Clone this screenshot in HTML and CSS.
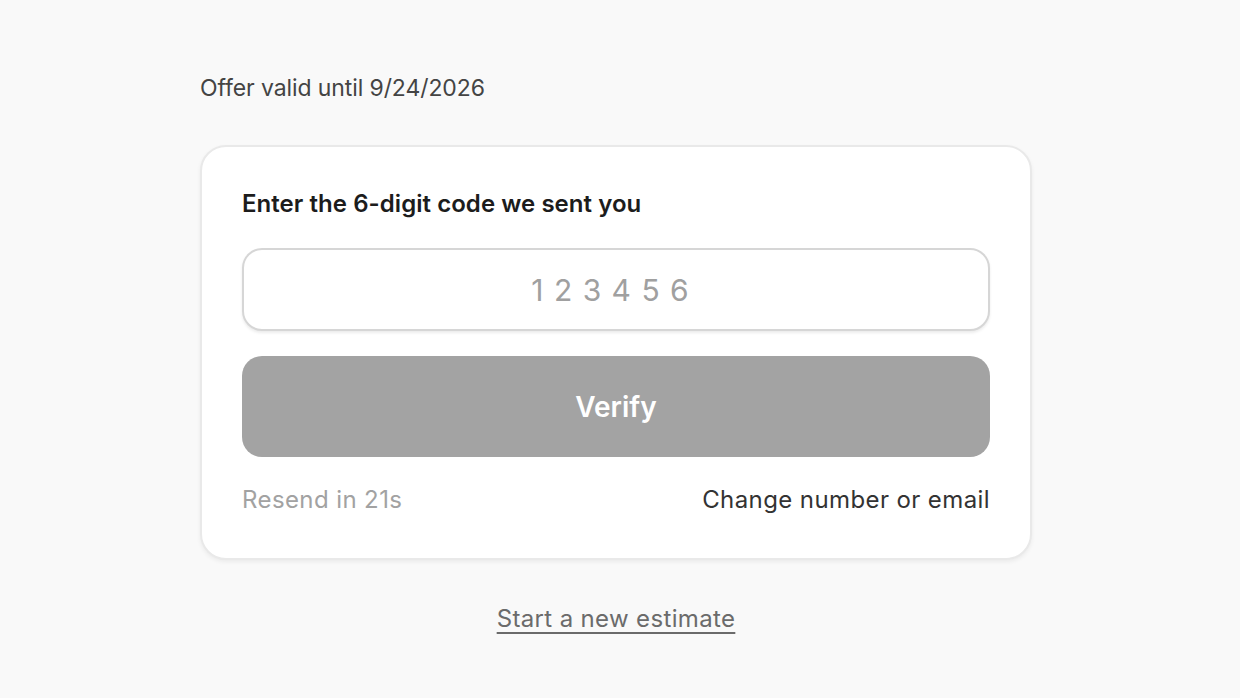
FILE: index.html
```html
<!DOCTYPE html>
<html lang="en">
<head>
<meta charset="utf-8">
<title>Verify code</title>
<link rel="stylesheet" href="styles.css">
</head>
<body>
<main class="page">
  <p class="offer">Offer valid until 9/24/2026</p>
  <section class="card">
    <h2 class="card-title">Enter the 6-digit code we sent you</h2>
    <input class="code-input" type="text" placeholder="1 2 3 4 5 6" inputmode="numeric">
    <button class="verify-btn" type="button">Verify</button>
    <div class="card-footer">
      <span class="resend">Resend in 21s</span>
      <a class="change-link" href="#">Change number or email</a>
    </div>
  </section>
  <div class="restart">
    <a class="restart-link" href="#">Start a new estimate</a>
  </div>
</main>
</body>
</html>
```

FILE: styles.css
```css
* { box-sizing: border-box; }
html, body {
  margin: 0;
  padding: 0;
  background: #f9f9f9;
  font-family: Inter, Lato, "Noto Sans", sans-serif;
  font-variant-ligatures: none;
}
.page {
  width: 832px;
  margin-left: 200px;
  padding-top: 72px;
}
.offer {
  margin: 0 0 41px 0;
  font-size: 23px;
  line-height: 32px;
  letter-spacing: -0.1px;
  color: #444444;
}
.card {
  background: #ffffff;
  border: 2px solid #e9e9e9;
  border-radius: 26px;
  padding: 41px 40px 42px 40px;
  box-shadow: 0 2px 4px rgba(0,0,0,0.06);
  display: flex;
  flex-direction: column;
}
.card-title {
  margin: 0;
  font-size: 24px;
  line-height: 32px;
  font-weight: 600;
  letter-spacing: 0.05px;
  color: #1c1c1c;
}
.code-input {
  margin-top: 28px;
  height: 83px;
  width: 100%;
  padding: 0 11px 0 0;
  border: 2px solid #d6d6d6;
  border-radius: 20px;
  background: #ffffff;
  box-shadow: 0 2px 3px rgba(0,0,0,0.08);
  text-align: center;
  font-family: inherit;
  font-size: 30px;
  color: #333;
  outline: none;
}
.code-input::placeholder {
  color: #a0a0a0;
  letter-spacing: 1px;
}
.verify-btn {
  margin-top: 25px;
  height: 101px;
  width: 100%;
  border: none;
  border-radius: 20px;
  background: #a3a3a3;
  color: #ffffff;
  font-family: inherit;
  font-size: 28px;
  font-weight: 600;
  cursor: pointer;
}
.card-footer {
  margin-top: 27px;
  display: flex;
  justify-content: space-between;
  align-items: center;
  font-size: 24px;
  line-height: 32px;
  letter-spacing: 0.4px;
}
.resend { color: #a2a2a2; }
.change-link {
  color: #333333;
  text-decoration: none;
}
.restart {
  display: flex;
  justify-content: center;
  margin-top: 43px;
}
.restart-link {
  font-size: 24px;
  line-height: 32px;
  letter-spacing: 0.35px;
  color: #6b6b6b;
  text-decoration: underline;
  text-decoration-thickness: 2px;
  text-underline-offset: 5px;
}
```
